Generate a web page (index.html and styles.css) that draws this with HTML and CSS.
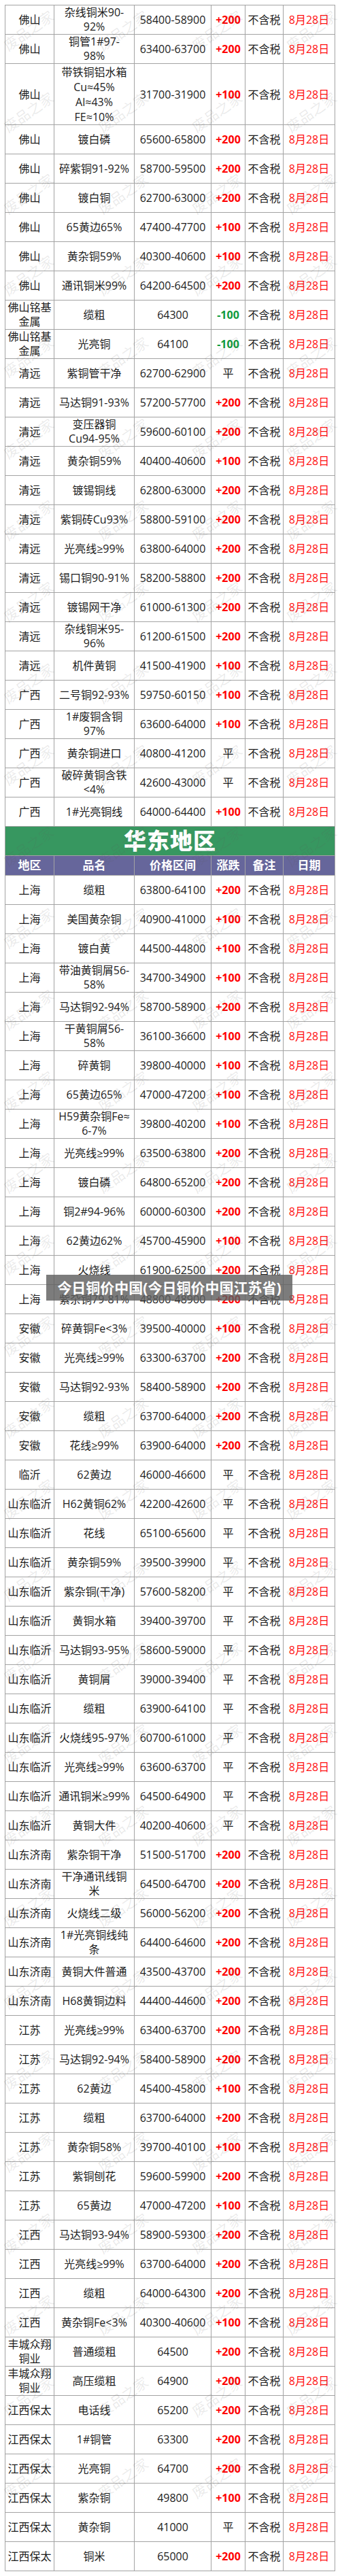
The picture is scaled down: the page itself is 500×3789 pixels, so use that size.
FILE: index.html
```html
<!DOCTYPE html>
<html lang="zh-CN">
<head>
<meta charset="utf-8">
<title>铜价</title>
<link rel="stylesheet" href="styles.css">
</head>
<body>
<div class="page">
<table class="sheet">
<colgroup><col class="c1"><col class="c2"><col class="c3"><col class="c4"><col class="c5"><col class="c6"></colgroup>
<tbody>
<tr><td>佛山</td><td>杂线铜米90-<br>92%</td><td>58400-58900</td><td class="up">+200</td><td>不含税</td><td class="date">8月28日</td></tr>
<tr><td>佛山</td><td>铜管1#97-<br>98%</td><td>63400-63700</td><td class="up">+200</td><td>不含税</td><td class="date">8月28日</td></tr>
<tr class="tall"><td>佛山</td><td>带铁铜铝水箱<br>Cu≈45%<br>Al≈43%<br>FE≈10%</td><td>31700-31900</td><td class="up">+100</td><td>不含税</td><td class="date">8月28日</td></tr>
<tr><td>佛山</td><td>镀白磷</td><td>65600-65800</td><td class="up">+200</td><td>不含税</td><td class="date">8月28日</td></tr>
<tr><td>佛山</td><td>碎紫铜91-92%</td><td>58700-59500</td><td class="up">+200</td><td>不含税</td><td class="date">8月28日</td></tr>
<tr><td>佛山</td><td>镀白铜</td><td>62700-63000</td><td class="up">+200</td><td>不含税</td><td class="date">8月28日</td></tr>
<tr><td>佛山</td><td>65黄边65%</td><td>47400-47700</td><td class="up">+100</td><td>不含税</td><td class="date">8月28日</td></tr>
<tr><td>佛山</td><td>黄杂铜59%</td><td>40300-40600</td><td class="up">+100</td><td>不含税</td><td class="date">8月28日</td></tr>
<tr><td>佛山</td><td>通讯铜米99%</td><td>64200-64500</td><td class="up">+200</td><td>不含税</td><td class="date">8月28日</td></tr>
<tr><td>佛山铭基<br>金属</td><td>缆粗</td><td>64300</td><td class="down">-100</td><td>不含税</td><td class="date">8月28日</td></tr>
<tr><td>佛山铭基<br>金属</td><td>光亮铜</td><td>64100</td><td class="down">-100</td><td>不含税</td><td class="date">8月28日</td></tr>
<tr><td>清远</td><td>紫铜管干净</td><td>62700-62900</td><td>平</td><td>不含税</td><td class="date">8月28日</td></tr>
<tr><td>清远</td><td>马达铜91-93%</td><td>57200-57700</td><td class="up">+200</td><td>不含税</td><td class="date">8月28日</td></tr>
<tr><td>清远</td><td>变压器铜<br>Cu94-95%</td><td>59600-60100</td><td class="up">+200</td><td>不含税</td><td class="date">8月28日</td></tr>
<tr><td>清远</td><td>黄杂铜59%</td><td>40400-40600</td><td class="up">+100</td><td>不含税</td><td class="date">8月28日</td></tr>
<tr><td>清远</td><td>镀锡铜线</td><td>62800-63000</td><td class="up">+200</td><td>不含税</td><td class="date">8月28日</td></tr>
<tr><td>清远</td><td>紫铜砖Cu93%</td><td>58800-59100</td><td class="up">+200</td><td>不含税</td><td class="date">8月28日</td></tr>
<tr><td>清远</td><td>光亮线≥99%</td><td>63800-64000</td><td class="up">+200</td><td>不含税</td><td class="date">8月28日</td></tr>
<tr><td>清远</td><td>锡口铜90-91%</td><td>58200-58800</td><td class="up">+200</td><td>不含税</td><td class="date">8月28日</td></tr>
<tr><td>清远</td><td>镀锡网干净</td><td>61000-61300</td><td class="up">+200</td><td>不含税</td><td class="date">8月28日</td></tr>
<tr><td>清远</td><td>杂线铜米95-<br>96%</td><td>61200-61500</td><td class="up">+200</td><td>不含税</td><td class="date">8月28日</td></tr>
<tr><td>清远</td><td>机件黄铜</td><td>41500-41900</td><td class="up">+100</td><td>不含税</td><td class="date">8月28日</td></tr>
<tr><td>广西</td><td>二号铜92-93%</td><td>59750-60150</td><td class="up">+100</td><td>不含税</td><td class="date">8月28日</td></tr>
<tr><td>广西</td><td>1#废铜含铜<br>97%</td><td>63600-64000</td><td class="up">+100</td><td>不含税</td><td class="date">8月28日</td></tr>
<tr><td>广西</td><td>黄杂铜进口</td><td>40800-41200</td><td>平</td><td>不含税</td><td class="date">8月28日</td></tr>
<tr><td>广西</td><td>破碎黄铜含铁<br>&lt;4%</td><td>42600-43000</td><td>平</td><td>不含税</td><td class="date">8月28日</td></tr>
<tr><td>广西</td><td>1#光亮铜线</td><td>64000-64400</td><td class="up">+100</td><td>不含税</td><td class="date">8月28日</td></tr>
<tr class="banner"><td colspan="6">华东地区</td></tr>
<tr class="head"><th>地区</th><th>品名</th><th>价格区间</th><th>涨跌</th><th>备注</th><th>日期</th></tr>
<tr><td>上海</td><td>缆粗</td><td>63800-64100</td><td class="up">+200</td><td>不含税</td><td class="date">8月28日</td></tr>
<tr><td>上海</td><td>美国黄杂铜</td><td>40900-41000</td><td class="up">+100</td><td>不含税</td><td class="date">8月28日</td></tr>
<tr><td>上海</td><td>镀白黄</td><td>44500-44800</td><td class="up">+100</td><td>不含税</td><td class="date">8月28日</td></tr>
<tr><td>上海</td><td>带油黄铜屑56-<br>58%</td><td>34700-34900</td><td class="up">+100</td><td>不含税</td><td class="date">8月28日</td></tr>
<tr><td>上海</td><td>马达铜92-94%</td><td>58700-58900</td><td class="up">+200</td><td>不含税</td><td class="date">8月28日</td></tr>
<tr><td>上海</td><td>干黄铜屑56-<br>58%</td><td>36100-36600</td><td class="up">+100</td><td>不含税</td><td class="date">8月28日</td></tr>
<tr><td>上海</td><td>碎黄铜</td><td>39800-40000</td><td class="up">+100</td><td>不含税</td><td class="date">8月28日</td></tr>
<tr><td>上海</td><td>65黄边65%</td><td>47000-47200</td><td class="up">+100</td><td>不含税</td><td class="date">8月28日</td></tr>
<tr><td>上海</td><td>H59黄杂铜Fe≈<br>6-7%</td><td>39800-40200</td><td class="up">+100</td><td>不含税</td><td class="date">8月28日</td></tr>
<tr><td>上海</td><td>光亮线≥99%</td><td>63500-63800</td><td class="up">+200</td><td>不含税</td><td class="date">8月28日</td></tr>
<tr><td>上海</td><td>镀白磷</td><td>64800-65200</td><td class="up">+200</td><td>不含税</td><td class="date">8月28日</td></tr>
<tr><td>上海</td><td>铜2#94-96%</td><td>60000-60300</td><td class="up">+200</td><td>不含税</td><td class="date">8月28日</td></tr>
<tr><td>上海</td><td>62黄边62%</td><td>45700-45900</td><td class="up">+100</td><td>不含税</td><td class="date">8月28日</td></tr>
<tr><td>上海</td><td>火烧线</td><td>61900-62500</td><td class="up">+200</td><td>不含税</td><td class="date">8月28日</td></tr>
<tr><td>上海</td><td>紫杂铜79-81%</td><td>48800-48900</td><td class="up">+200</td><td>不含税</td><td class="date">8月28日</td></tr>
<tr><td>安徽</td><td>碎黄铜Fe&lt;3%</td><td>39500-40000</td><td class="up">+100</td><td>不含税</td><td class="date">8月28日</td></tr>
<tr><td>安徽</td><td>光亮线≥99%</td><td>63300-63700</td><td class="up">+200</td><td>不含税</td><td class="date">8月28日</td></tr>
<tr><td>安徽</td><td>马达铜92-93%</td><td>58400-58900</td><td class="up">+200</td><td>不含税</td><td class="date">8月28日</td></tr>
<tr><td>安徽</td><td>缆粗</td><td>63700-64000</td><td class="up">+200</td><td>不含税</td><td class="date">8月28日</td></tr>
<tr><td>安徽</td><td>花线≥99%</td><td>63900-64000</td><td class="up">+200</td><td>不含税</td><td class="date">8月28日</td></tr>
<tr><td>临沂</td><td>62黄边</td><td>46000-46600</td><td>平</td><td>不含税</td><td class="date">8月28日</td></tr>
<tr><td>山东临沂</td><td>H62黄铜62%</td><td>42200-42600</td><td>平</td><td>不含税</td><td class="date">8月28日</td></tr>
<tr><td>山东临沂</td><td>花线</td><td>65100-65600</td><td>平</td><td>不含税</td><td class="date">8月28日</td></tr>
<tr><td>山东临沂</td><td>黄杂铜59%</td><td>39500-39900</td><td>平</td><td>不含税</td><td class="date">8月28日</td></tr>
<tr><td>山东临沂</td><td>紫杂铜(干净)</td><td>57600-58200</td><td>平</td><td>不含税</td><td class="date">8月28日</td></tr>
<tr><td>山东临沂</td><td>黄铜水箱</td><td>39400-39700</td><td>平</td><td>不含税</td><td class="date">8月28日</td></tr>
<tr><td>山东临沂</td><td>马达铜93-95%</td><td>58600-59000</td><td>平</td><td>不含税</td><td class="date">8月28日</td></tr>
<tr><td>山东临沂</td><td>黄铜屑</td><td>39000-39400</td><td>平</td><td>不含税</td><td class="date">8月28日</td></tr>
<tr><td>山东临沂</td><td>缆粗</td><td>63900-64100</td><td>平</td><td>不含税</td><td class="date">8月28日</td></tr>
<tr><td>山东临沂</td><td>火烧线95-97%</td><td>60700-61000</td><td>平</td><td>不含税</td><td class="date">8月28日</td></tr>
<tr><td>山东临沂</td><td>光亮线≥99%</td><td>63600-63700</td><td>平</td><td>不含税</td><td class="date">8月28日</td></tr>
<tr><td>山东临沂</td><td>通讯铜米≥99%</td><td>64500-64900</td><td>平</td><td>不含税</td><td class="date">8月28日</td></tr>
<tr><td>山东临沂</td><td>黄铜大件</td><td>40200-40600</td><td>平</td><td>不含税</td><td class="date">8月28日</td></tr>
<tr><td>山东济南</td><td>紫杂铜干净</td><td>51500-51700</td><td class="up">+200</td><td>不含税</td><td class="date">8月28日</td></tr>
<tr><td>山东济南</td><td>干净通讯线铜<br>米</td><td>64500-64700</td><td class="up">+200</td><td>不含税</td><td class="date">8月28日</td></tr>
<tr><td>山东济南</td><td>火烧线二级</td><td>56000-56200</td><td class="up">+200</td><td>不含税</td><td class="date">8月28日</td></tr>
<tr><td>山东济南</td><td>1#光亮铜线纯<br>条</td><td>64400-64600</td><td class="up">+200</td><td>不含税</td><td class="date">8月28日</td></tr>
<tr><td>山东济南</td><td>黄铜大件普通</td><td>43500-43700</td><td class="up">+200</td><td>不含税</td><td class="date">8月28日</td></tr>
<tr><td>山东济南</td><td>H68黄铜边料</td><td>44400-44600</td><td class="up">+200</td><td>不含税</td><td class="date">8月28日</td></tr>
<tr><td>江苏</td><td>光亮线≥99%</td><td>63400-63700</td><td class="up">+200</td><td>不含税</td><td class="date">8月28日</td></tr>
<tr><td>江苏</td><td>马达铜92-94%</td><td>58400-58900</td><td class="up">+200</td><td>不含税</td><td class="date">8月28日</td></tr>
<tr><td>江苏</td><td>62黄边</td><td>45400-45800</td><td class="up">+100</td><td>不含税</td><td class="date">8月28日</td></tr>
<tr><td>江苏</td><td>缆粗</td><td>63700-64000</td><td class="up">+200</td><td>不含税</td><td class="date">8月28日</td></tr>
<tr><td>江苏</td><td>黄杂铜58%</td><td>39700-40100</td><td class="up">+100</td><td>不含税</td><td class="date">8月28日</td></tr>
<tr><td>江苏</td><td>紫铜刨花</td><td>59600-59900</td><td class="up">+200</td><td>不含税</td><td class="date">8月28日</td></tr>
<tr><td>江苏</td><td>65黄边</td><td>47000-47200</td><td class="up">+100</td><td>不含税</td><td class="date">8月28日</td></tr>
<tr><td>江西</td><td>马达铜93-94%</td><td>58900-59300</td><td class="up">+200</td><td>不含税</td><td class="date">8月28日</td></tr>
<tr><td>江西</td><td>光亮线≥99%</td><td>63700-64000</td><td class="up">+200</td><td>不含税</td><td class="date">8月28日</td></tr>
<tr><td>江西</td><td>缆粗</td><td>64000-64300</td><td class="up">+200</td><td>不含税</td><td class="date">8月28日</td></tr>
<tr><td>江西</td><td>黄杂铜Fe&lt;3%</td><td>40300-40600</td><td class="up">+100</td><td>不含税</td><td class="date">8月28日</td></tr>
<tr><td>丰城众翔<br>铜业</td><td>普通缆粗</td><td>64500</td><td class="up">+200</td><td>不含税</td><td class="date">8月28日</td></tr>
<tr><td>丰城众翔<br>铜业</td><td>高压缆粗</td><td>64900</td><td class="up">+200</td><td>不含税</td><td class="date">8月28日</td></tr>
<tr><td>江西保太</td><td>电话线</td><td>65200</td><td class="up">+200</td><td>不含税</td><td class="date">8月28日</td></tr>
<tr><td>江西保太</td><td>1#铜管</td><td>63300</td><td class="up">+200</td><td>不含税</td><td class="date">8月28日</td></tr>
<tr><td>江西保太</td><td>光亮铜</td><td>64700</td><td class="up">+200</td><td>不含税</td><td class="date">8月28日</td></tr>
<tr><td>江西保太</td><td>紫杂铜</td><td>49800</td><td class="up">+100</td><td>不含税</td><td class="date">8月28日</td></tr>
<tr><td>江西保太</td><td>黄杂铜</td><td>41000</td><td>平</td><td>不含税</td><td class="date">8月28日</td></tr>
<tr><td>江西保太</td><td>铜米</td><td>65000</td><td class="up">+200</td><td>不含税</td><td class="date">8月28日</td></tr>
</tbody>
</table>

<div class="watermarks" aria-hidden="true">
<span>废品之家</span><span>废品之家</span><span>废品之家</span><span>废品之家</span>
<span>废品之家</span><span>废品之家</span><span>废品之家</span><span>废品之家</span>
<span>废品之家</span><span>废品之家</span><span>废品之家</span><span>废品之家</span>
<span>废品之家</span><span>废品之家</span><span>废品之家</span><span>废品之家</span>
<span>废品之家</span><span>废品之家</span><span>废品之家</span><span>废品之家</span>
<span>废品之家</span><span>废品之家</span><span>废品之家</span><span>废品之家</span>
<span>废品之家</span><span>废品之家</span><span>废品之家</span><span>废品之家</span>
<span>废品之家</span><span>废品之家</span><span>废品之家</span><span>废品之家</span>
<span>废品之家</span><span>废品之家</span><span>废品之家</span><span>废品之家</span>
<span>废品之家</span><span>废品之家</span><span>废品之家</span><span>废品之家</span>
<span>废品之家</span><span>废品之家</span><span>废品之家</span><span>废品之家</span>
<span>废品之家</span><span>废品之家</span><span>废品之家</span><span>废品之家</span>
<span>废品之家</span><span>废品之家</span><span>废品之家</span><span>废品之家</span>
<span>废品之家</span><span>废品之家</span><span>废品之家</span><span>废品之家</span>
<span>废品之家</span><span>废品之家</span><span>废品之家</span><span>废品之家</span>
<span>废品之家</span><span>废品之家</span><span>废品之家</span><span>废品之家</span>
<span>废品之家</span><span>废品之家</span><span>废品之家</span><span>废品之家</span>
<span>废品之家</span><span>废品之家</span><span>废品之家</span><span>废品之家</span>
<span>废品之家</span><span>废品之家</span><span>废品之家</span><span>废品之家</span>
<span>废品之家</span><span>废品之家</span><span>废品之家</span><span>废品之家</span>
<span>废品之家</span><span>废品之家</span><span>废品之家</span><span>废品之家</span>
<span>废品之家</span><span>废品之家</span><span>废品之家</span><span>废品之家</span>
<span>废品之家</span><span>废品之家</span><span>废品之家</span><span>废品之家</span>
<span>废品之家</span><span>废品之家</span><span>废品之家</span><span>废品之家</span>
<span>废品之家</span><span>废品之家</span><span>废品之家</span><span>废品之家</span>
<span>废品之家</span><span>废品之家</span><span>废品之家</span><span>废品之家</span>
<span>废品之家</span><span>废品之家</span><span>废品之家</span><span>废品之家</span>
<span>废品之家</span><span>废品之家</span><span>废品之家</span><span>废品之家</span>
<span>废品之家</span><span>废品之家</span><span>废品之家</span><span>废品之家</span>
<span>废品之家</span><span>废品之家</span><span>废品之家</span><span>废品之家</span>
<span>废品之家</span><span>废品之家</span><span>废品之家</span><span>废品之家</span>
</div>

<div class="caption">今日铜价中国(今日铜价中国江苏省)</div>
</div>
</body>
</html>
```

FILE: styles.css
```css
html, body {
  margin: 0;
  padding: 0;
  background: #ffffff;
}

.page {
  position: relative;
  width: 500px;
  height: 3789px;
  box-sizing: border-box;
  padding: 7px 0 0 7px;
  overflow: hidden;
  font-family: "Open Sans", "Noto Sans CJK SC", sans-serif;
  color: #1c1c1c;
}

.sheet {
  table-layout: fixed;
  border-collapse: collapse;
  width: 485px;
  font-size: 16px;
}

.c1 { width: 72px; }
.c2 { width: 118px; }
.c3 { width: 113px; }
.c4 { width: 50px; }
.c5 { width: 56px; }
.c6 { width: 76px; }

.sheet tr {
  height: 43px;
}

.sheet td,
.sheet th {
  border: 1px solid #a3a3a3;
  padding: 0;
  text-align: center;
  vertical-align: middle;
  line-height: 21px;
  white-space: nowrap;
}

.sheet tr.tall {
  height: 90px;
}

.sheet tr.tall td {
  line-height: 22px;
}

.up {
  color: #ff0000;
  font-weight: 700;
}

.down {
  color: #119a3c;
  font-weight: 700;
}

.date {
  color: #ff1010;
}

.sheet tr.banner {
  height: 43px;
}

.sheet tr.banner td {
  background: #379760;
  color: #ffffff;
  font-size: 33px;
  font-weight: 900;
  line-height: 40px;
  letter-spacing: 1px;
}

.sheet tr.head {
  height: 29px;
}

.sheet tr.head th {
  background: #66669b;
  color: #ffffff;
  font-size: 17px;
  font-weight: 700;
  line-height: 26px;
}

.watermarks {
  position: absolute;
  top: -15px;
  left: 0;
  width: 500px;
  display: grid;
  grid-template-columns: repeat(4, max-content);
  justify-content: space-between;
  grid-auto-rows: 120px;
  align-items: center;
  pointer-events: none;
}

.watermarks span {
  display: block;
  font-size: 21px;
  line-height: 24px;
  color: rgba(90, 90, 90, 0.13);
  transform: rotate(-35deg);
  white-space: nowrap;
}

.caption {
  position: absolute;
  top: 1875px;
  left: 68px;
  width: 362px;
  height: 38px;
  background: rgba(95, 95, 95, 0.82);
  color: #ffffff;
  font-size: 21px;
  font-weight: 700;
  line-height: 38px;
  text-align: center;
}
```
